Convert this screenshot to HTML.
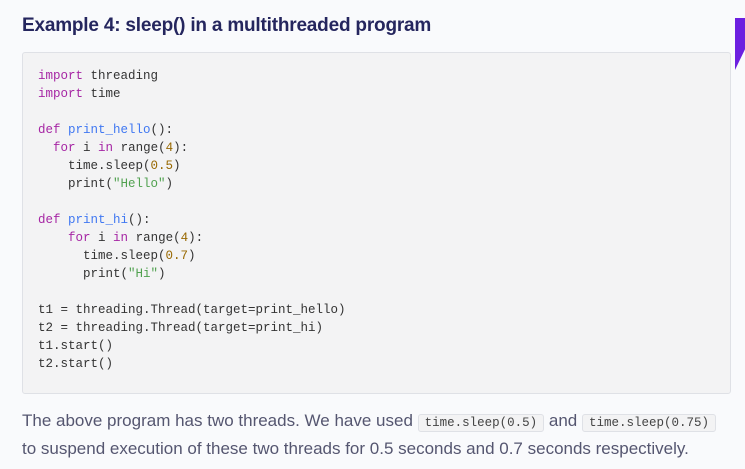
<!DOCTYPE html>
<html><head><style>
body{margin:0;width:745px;height:469px;background:#f9fafc;position:relative;overflow:hidden;font-family:"Liberation Sans",sans-serif}
h2{position:absolute;left:22px;top:15px;margin:0;font-size:19px;font-weight:bold;color:#25265e;letter-spacing:-0.2px}
.box{position:absolute;left:22px;top:52px;width:707px;height:340px;background:#f3f3f4;border:1px solid #dfe1e6;border-radius:3px}
pre{position:absolute;left:38px;top:67px;margin:0;font-family:"Liberation Mono",monospace;font-size:12.5px;line-height:18px;color:#333}
.k{color:#a626a4}.f{color:#4078f2}.n{color:#986801}.s{color:#50a14f}
p{position:absolute;left:22px;top:408px;margin:0;width:720px;font-size:17px;line-height:26px;color:#555670;letter-spacing:0}
code{font-family:"Liberation Mono",monospace;font-size:12.5px;background:#f3f3f4;border:1px solid #dfe1e6;border-radius:3px;padding:1px 6px;color:#444;letter-spacing:0}
.tab{position:absolute;left:735px;top:18px;width:10px;height:52px;background:#6c1fe0;clip-path:polygon(0 0,100% 0,100% 60%,0 100%)}
</style></head><body>
<h2>Example 4: sleep() in a multithreaded program</h2>
<div class="tab"></div>
<div class="box"></div>
<pre><span class="k">import</span> threading
<span class="k">import</span> time

<span class="k">def</span> <span class="f">print_hello</span>():
  <span class="k">for</span> i <span class="k">in</span> range(<span class="n">4</span>):
    time.sleep(<span class="n">0.5</span>)
    print(<span class="s">"Hello"</span>)

<span class="k">def</span> <span class="f">print_hi</span>():
    <span class="k">for</span> i <span class="k">in</span> range(<span class="n">4</span>):
      time.sleep(<span class="n">0.7</span>)
      print(<span class="s">"Hi"</span>)

t1 = threading.Thread(target=print_hello)
t2 = threading.Thread(target=print_hi)
t1.start()
t2.start()</pre>
<p>The above program has two threads. We have used <code>time.sleep(0.5)</code> and <code>time.sleep(0.75)</code><br>to suspend execution of these two threads for 0.5 seconds and 0.7 seconds respectively.</p>
</body></html>
